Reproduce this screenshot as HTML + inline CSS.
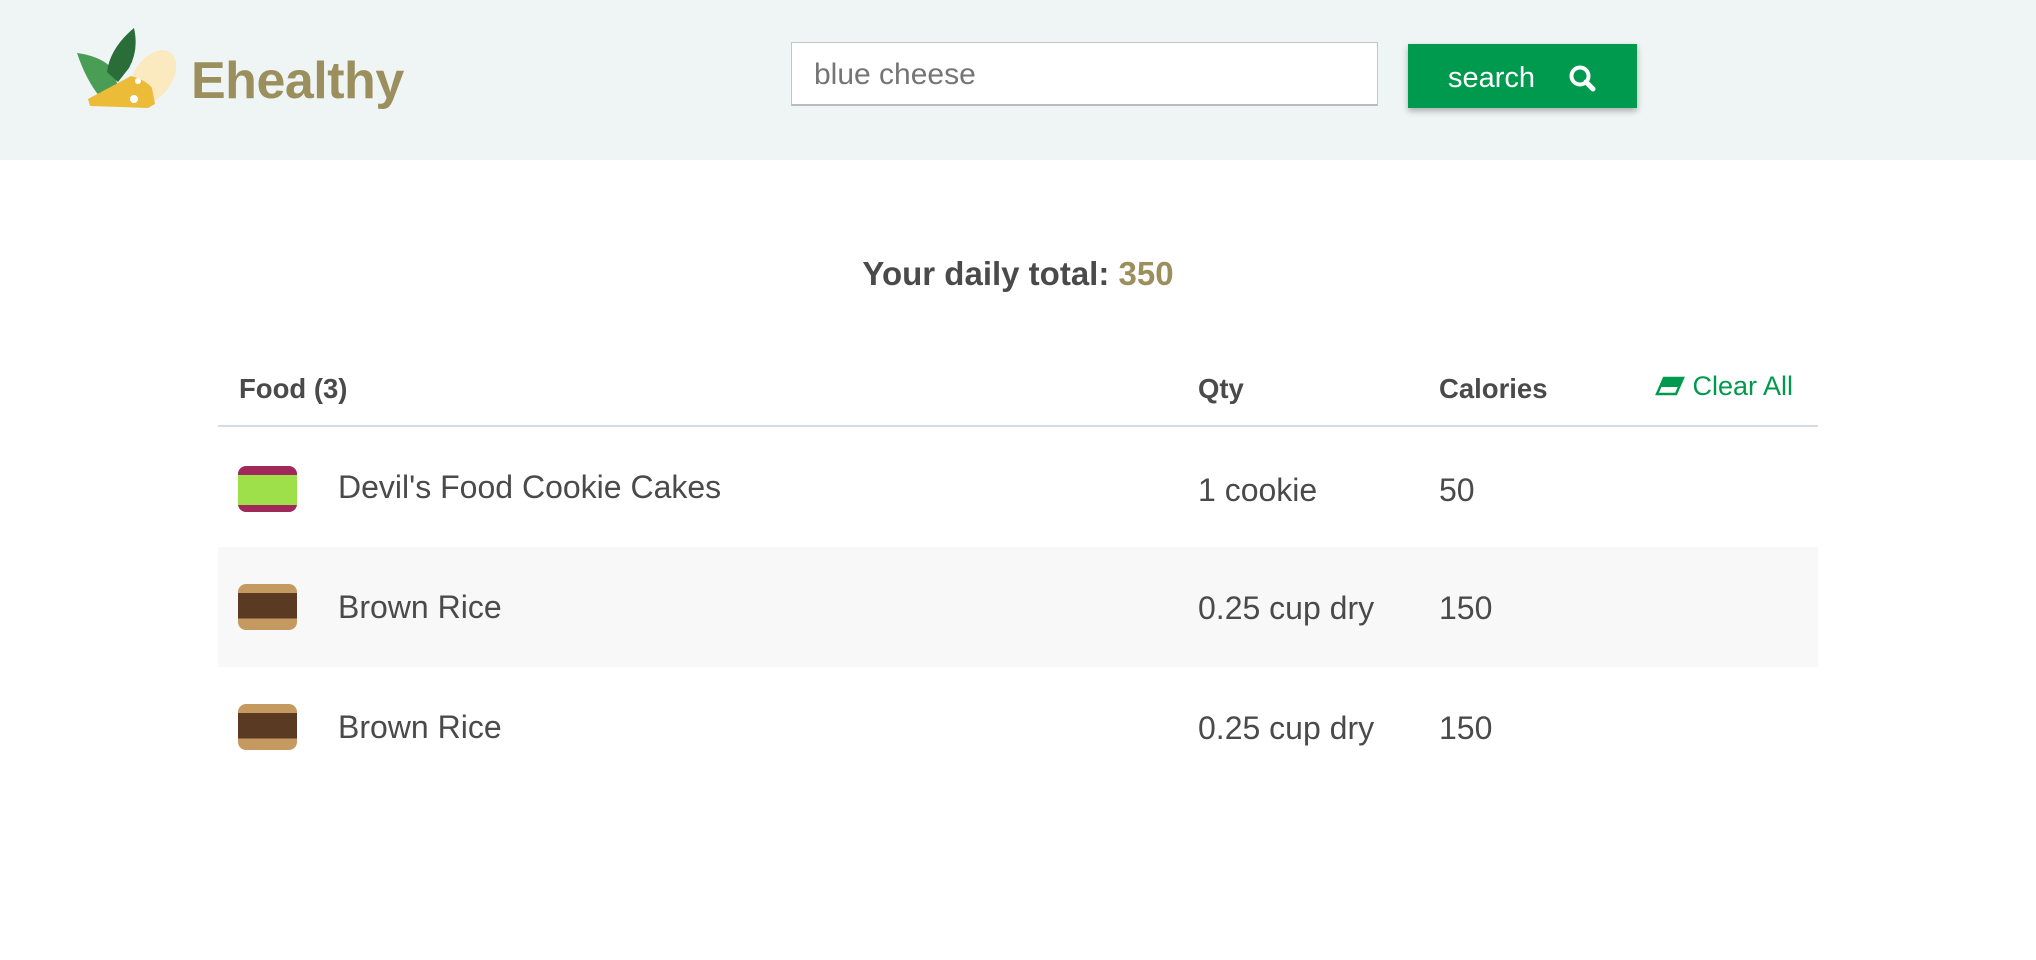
<!DOCTYPE html>
<html><head><meta charset="utf-8"><style>
*{margin:0;padding:0;box-sizing:border-box}
body{width:2036px;height:960px;background:#fff;font-family:"Liberation Sans",Arial,sans-serif;color:#4a4a4a;position:relative;overflow:hidden}
.hdr{position:absolute;left:0;top:0;width:2036px;height:160px;background:#eff5f5}
.abs{position:absolute;white-space:nowrap}
.brand{left:191px;top:51px;font-size:52px;font-weight:bold;color:#9c8f5e;letter-spacing:-0.5px}
.inp{left:791px;top:42px;width:587px;height:64px;background:#fff;border:1px solid #c4c4c4;border-bottom:2px solid #bbb}
.inp span{position:absolute;left:22px;top:15px;font-size:30px;color:#757575}
.btn{left:1408px;top:44px;width:229px;height:64px;background:#009a4e;box-shadow:0 3px 6px rgba(0,0,0,.3);color:#fff;font-size:29px}
.total{left:0;width:2036px;text-align:center;top:255px;font-size:33px;font-weight:bold}
.th{top:373px;font-size:27.5px;font-weight:bold}
.line{position:absolute;left:218px;top:425px;width:1600px;height:2px;background:#d0dde3}
.row{position:absolute;left:218px;width:1600px;height:120px}
.td{font-size:32px}
.img{position:absolute;left:20px;width:59px;height:46px;border-radius:8px}
</style></head><body>
<div class="hdr"></div>
<svg class="abs" style="left:60px;top:20px" width="130" height="100" viewBox="60 20 130 100">
<ellipse cx="153" cy="77" rx="19" ry="30" transform="rotate(35 153 77)" fill="#fbe9c0"/>
<path d="M77 53 Q100 56 112 68 L118 86 L110 92 L100 97 Q86 80 77 53Z" fill="#4a9d55"/>
<path d="M134 28 Q139 50 129 68 L118 82 L107 72 Q110 48 134 28Z" fill="#2a6d38"/>
<path d="M88 99 L131 76 Q146 80 152 88 L155 104 L148 108 L90 106Z" fill="#ecbc38"/>
<circle cx="138" cy="81" r="3" fill="#fff"/><circle cx="134" cy="99" r="4" fill="#fff"/>
</svg>
<div class="abs brand">Ehealthy</div>
<div class="abs inp"><span>blue cheese</span></div>
<div class="abs btn"><span style="position:absolute;left:40px;top:18px">search</span>
<svg style="position:absolute;left:160px;top:20px" width="28" height="28" viewBox="0 0 28 28"><circle cx="12" cy="12" r="8.5" fill="none" stroke="#fff" stroke-width="4"/><path d="M18 18 L25 25" stroke="#fff" stroke-width="5" stroke-linecap="round"/></svg></div>
<div class="abs total">Your daily total: <span style="color:#9c8f5e">350</span></div>
<div class="abs th" style="left:239px">Food (3)</div>
<div class="abs th" style="left:1198px">Qty</div>
<div class="abs th" style="left:1439px">Calories</div>
<div class="abs" style="left:1655px;top:371px;font-size:27px;color:#009a4e">
<svg width="30" height="22" viewBox="0 0 30 22" style="vertical-align:-2px"><path d="M9 3 L28 3 L21 19 L2 19Z" fill="none" stroke="#009a4e" stroke-width="2.5"/><path d="M9 3 L28 3 L24 12 L5 12Z" fill="#009a4e"/></svg> Clear All</div>
<div class="line"></div>
<div class="row" style="top:427px">
<div class="img" style="top:39px;background:linear-gradient(180deg,#a0285a 0 20%,#9de04a 20% 85%,#a0285a 85%)"></div>
<div class="abs td" style="left:120px;top:42px">Devil's Food Cookie Cakes</div>
<div class="abs td" style="left:980px;top:45px">1 cookie</div>
<div class="abs td" style="left:1221px;top:45px">50</div></div>
<div class="row" style="top:547px;background:#f8f8f8">
<div class="img" style="top:37px;background:linear-gradient(180deg,#c49a60 0 20%,#5b3a24 20% 75%,#c49a60 75%)"></div>
<div class="abs td" style="left:120px;top:42px">Brown Rice</div>
<div class="abs td" style="left:980px;top:43px">0.25 cup dry</div>
<div class="abs td" style="left:1221px;top:43px">150</div></div>
<div class="row" style="top:667px">
<div class="img" style="top:37px;background:linear-gradient(180deg,#c49a60 0 20%,#5b3a24 20% 75%,#c49a60 75%)"></div>
<div class="abs td" style="left:120px;top:42px">Brown Rice</div>
<div class="abs td" style="left:980px;top:43px">0.25 cup dry</div>
<div class="abs td" style="left:1221px;top:43px">150</div></div>
</body></html>
